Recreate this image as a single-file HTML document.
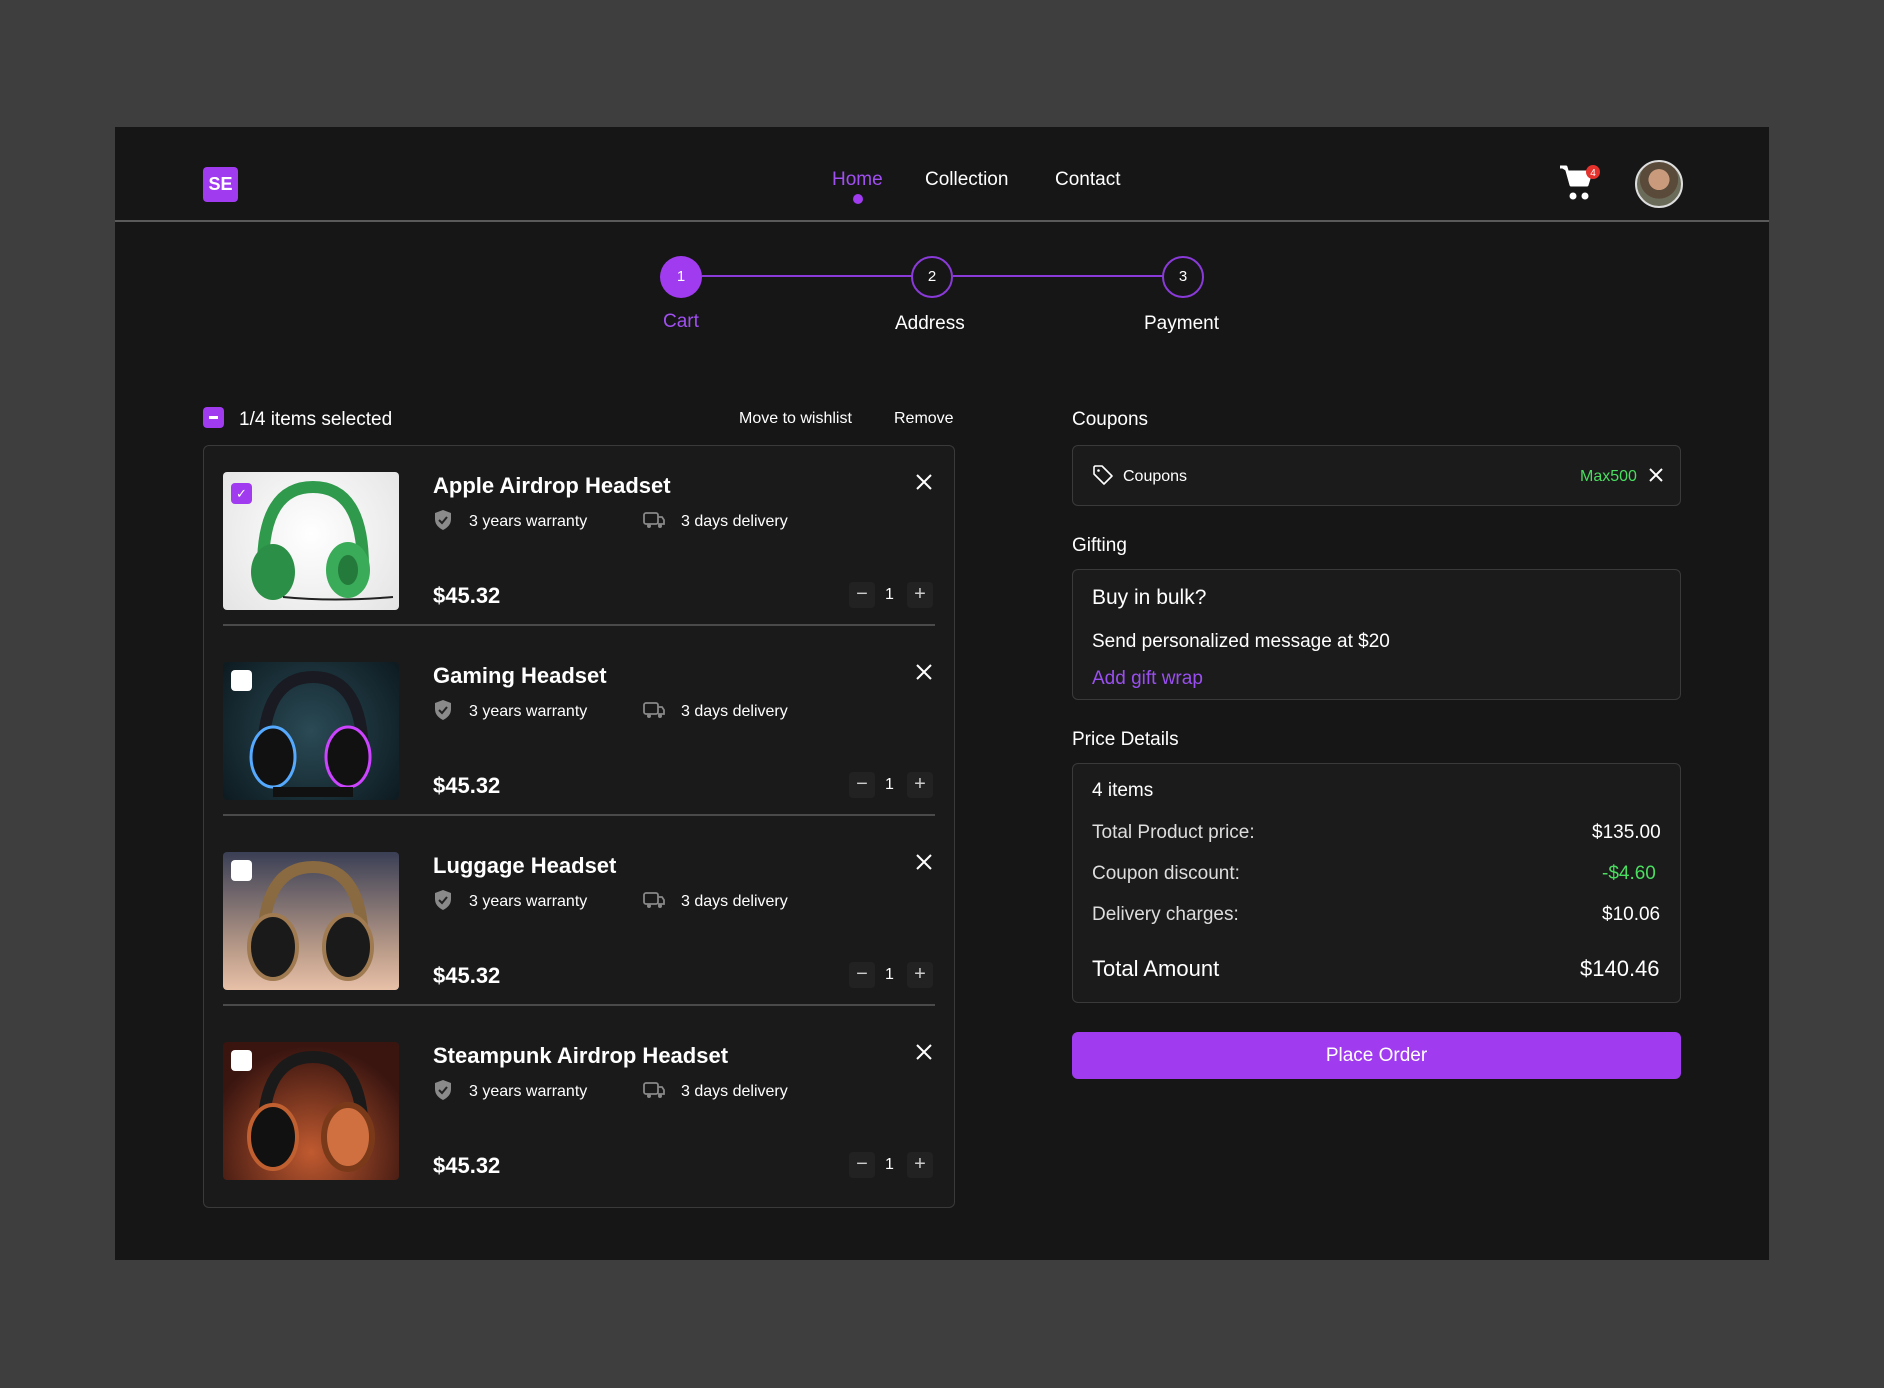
<!DOCTYPE html>
<html><head><meta charset="utf-8"><style>
*{margin:0;padding:0;box-sizing:border-box}
body{width:1884px;height:1388px;background:#3e3e3e;font-family:"Liberation Sans",sans-serif;color:#fff;position:relative;overflow:hidden}
.p{position:absolute;left:115px;top:127px;width:1654px;height:1133px;background:#161616}
.a{position:absolute;white-space:nowrap}
div.a[style*="font-size"]{margin-top:3px}
.box{position:absolute;border:1.5px solid #3a3a3a;border-radius:6px;background:#1b1b1b}
.img{position:absolute;left:223px;width:176px;height:138px;border-radius:4px;overflow:hidden}
.cb{position:absolute;width:21px;height:21px;border-radius:4px;background:#fff}
.qb{position:absolute;width:26px;height:26px;border-radius:4px;background:#222;color:#ccc;font-size:20px;text-align:center;line-height:25px}
.st{position:absolute;width:42px;height:42px;border-radius:50%;text-align:center;font-size:15px}
.pr{position:absolute;font-size:22px;font-weight:bold;left:433px}
</style></head><body>
<div class="p"></div>
<!-- header -->
<div class="a" style="left:203px;top:167px;width:35px;height:35px;background:#a03bf0;border-radius:4px;font-weight:bold;font-size:18px;line-height:35px;text-align:center;margin-top:0">SE</div>
<div class="a" style="left:832px;top:166px;font-size:19px;color:#a04ff0">Home</div>
<div class="a" style="left:853px;top:194px;width:10px;height:10px;border-radius:50%;background:#a03bf0"></div>
<div class="a" style="left:925px;top:166px;font-size:19px">Collection</div>
<div class="a" style="left:1055px;top:166px;font-size:19px">Contact</div>
<svg class="a" style="left:1558px;top:163px" width="44" height="40" viewBox="0 0 44 40"><path d="M2 4h6l5 18h16l4-13H10" fill="#fff" stroke="#fff" stroke-width="3" stroke-linejoin="round"/><circle cx="15" cy="33" r="3.5" fill="#fff"/><circle cx="27" cy="33" r="3.5" fill="#fff"/><circle cx="35" cy="9" r="7" fill="#e5322d"/><text x="35" y="13" font-size="10" fill="#fff" text-anchor="middle" font-family="Liberation Sans">4</text></svg>
<div class="a" style="left:1635px;top:160px;width:48px;height:48px;border-radius:50%;border:2px solid #ddd;background:radial-gradient(circle at 50% 40%,#c99a7c 0 30%,#5a4a3a 31% 55%,#6b6b5a 56%)"></div>
<div class="a" style="left:115px;top:220px;width:1654px;height:2px;background:#5a5a5a"></div>
<!-- stepper -->
<div class="a" style="left:702px;top:275px;width:210px;height:2px;background:#8a3ad8"></div>
<div class="a" style="left:953px;top:275px;width:210px;height:2px;background:#8a3ad8"></div>
<div class="st" style="left:660px;top:256px;background:#a03bf0;line-height:42px">1</div>
<div class="st" style="left:911px;top:256px;border:2px solid #8a3ad8;line-height:38px">2</div>
<div class="st" style="left:1162px;top:256px;border:2px solid #8a3ad8;line-height:38px">3</div>
<div class="a" style="left:663px;top:308px;font-size:19px;color:#a04ff0">Cart</div>
<div class="a" style="left:895px;top:310px;font-size:19px">Address</div>
<div class="a" style="left:1144px;top:310px;font-size:19px">Payment</div>
<!-- list header -->
<div class="a" style="left:203px;top:407px;width:21px;height:21px;border-radius:4px;background:#a03bf0"><div style="position:absolute;left:6px;top:9px;width:9px;height:2.5px;background:#fff"></div></div>
<div class="a" style="left:239px;top:406px;font-size:19px">1/4 items selected</div>
<div class="a" style="left:739px;top:407px;font-size:16px">Move to wishlist</div>
<div class="a" style="left:894px;top:407px;font-size:16px">Remove</div>
<div class="box" style="left:203px;top:445px;width:752px;height:763px;background:#1a1a1a"></div>

<!-- items -->
<div class="img" style="top:472px;background:radial-gradient(circle at 50% 45%,#fff,#e4e4e4)"><svg width="176" height="138"><path d="M40 95 Q40 15 90 15 Q140 15 140 95" fill="none" stroke="#2f9a4c" stroke-width="12"/><ellipse cx="50" cy="100" rx="22" ry="28" fill="#2c8f47"/><ellipse cx="125" cy="98" rx="22" ry="28" fill="#3aab58"/><ellipse cx="125" cy="98" rx="10" ry="15" fill="#237a3b"/><path d="M60 125 Q110 130 170 125" stroke="#222" stroke-width="2" fill="none"/></svg></div>
<div class="img" style="top:662px;background:radial-gradient(circle at 50% 50%,#2a4a55,#0d1a20)"><svg width="176" height="138"><path d="M40 95 Q40 15 90 15 Q140 15 140 95" fill="none" stroke="#1a1a22" stroke-width="12"/><ellipse cx="50" cy="95" rx="22" ry="30" fill="#111" stroke="#5af" stroke-width="3"/><ellipse cx="125" cy="95" rx="22" ry="30" fill="#111" stroke="#c4f" stroke-width="3"/><rect x="50" y="125" width="80" height="10" fill="#111"/></svg></div>
<div class="img" style="top:852px;background:linear-gradient(180deg,#3a3f55,#b89a88 70%,#e8c0a8)"><svg width="176" height="138"><path d="M40 95 Q40 15 90 15 Q140 15 140 95" fill="none" stroke="#8a6a40" stroke-width="12"/><ellipse cx="50" cy="95" rx="24" ry="32" fill="#1a1a1a" stroke="#a07a50" stroke-width="4"/><ellipse cx="125" cy="95" rx="24" ry="32" fill="#1a1a1a" stroke="#a07a50" stroke-width="4"/></svg></div>
<div class="img" style="top:1042px;background:radial-gradient(circle at 50% 80%,#c05a30,#3a1510 75%)"><svg width="176" height="138"><path d="M40 95 Q40 15 90 15 Q140 15 140 95" fill="none" stroke="#1a1a1a" stroke-width="12"/><ellipse cx="50" cy="95" rx="24" ry="32" fill="#111" stroke="#c06030" stroke-width="4"/><ellipse cx="125" cy="95" rx="24" ry="32" fill="#d07040" stroke="#7a3a1a" stroke-width="6"/></svg></div>

<div class="a" style="left:231px;top:483px;width:21px;height:21px;border-radius:4px;background:#a03bf0;color:#fff;font-size:13px;text-align:center;line-height:21px;margin-top:0">✓</div>
<div class="cb" style="left:231px;top:670px"></div>
<div class="cb" style="left:231px;top:860px"></div>
<div class="cb" style="left:231px;top:1050px"></div>

<div class="a" style="left:433px;top:470px;font-size:22px;font-weight:bold">Apple Airdrop Headset</div>
<div class="pr" style="top:583px">$45.32</div>
<div class="a" style="left:433px;top:660px;font-size:22px;font-weight:bold">Gaming Headset</div>
<div class="pr" style="top:773px">$45.32</div>
<div class="a" style="left:433px;top:850px;font-size:22px;font-weight:bold">Luggage Headset</div>
<div class="pr" style="top:963px">$45.32</div>
<div class="a" style="left:433px;top:1040px;font-size:22px;font-weight:bold">Steampunk Airdrop Headset</div>
<div class="pr" style="top:1153px">$45.32</div>

<div class="a" style="left:433px;top:509px"><svg width="20" height="22" viewBox="0 0 20 22"><path d="M10 1 L18 4 V10 Q18 17 10 21 Q2 17 2 10 V4Z" fill="#8a8a8a"/><path d="M6 11l3 3 5-6" stroke="#222" stroke-width="2" fill="none"/></svg></div>
<div class="a" style="left:469px;top:510px;font-size:16px">3 years warranty</div>
<div class="a" style="left:643px;top:510px"><svg width="22" height="20"><rect x="1" y="3" width="14" height="11" rx="2" fill="none" stroke="#888" stroke-width="1.8"/><path d="M15 7h4l2 3v4h-6" fill="none" stroke="#888" stroke-width="1.8"/><circle cx="6" cy="16" r="2" fill="#888"/><circle cx="17" cy="16" r="2" fill="#888"/></svg></div>
<div class="a" style="left:681px;top:510px;font-size:16px">3 days delivery</div>

<div class="a" style="left:433px;top:699px"><svg width="20" height="22" viewBox="0 0 20 22"><path d="M10 1 L18 4 V10 Q18 17 10 21 Q2 17 2 10 V4Z" fill="#8a8a8a"/><path d="M6 11l3 3 5-6" stroke="#222" stroke-width="2" fill="none"/></svg></div>
<div class="a" style="left:469px;top:700px;font-size:16px">3 years warranty</div>
<div class="a" style="left:643px;top:700px"><svg width="22" height="20"><rect x="1" y="3" width="14" height="11" rx="2" fill="none" stroke="#888" stroke-width="1.8"/><path d="M15 7h4l2 3v4h-6" fill="none" stroke="#888" stroke-width="1.8"/><circle cx="6" cy="16" r="2" fill="#888"/><circle cx="17" cy="16" r="2" fill="#888"/></svg></div>
<div class="a" style="left:681px;top:700px;font-size:16px">3 days delivery</div>

<div class="a" style="left:433px;top:889px"><svg width="20" height="22" viewBox="0 0 20 22"><path d="M10 1 L18 4 V10 Q18 17 10 21 Q2 17 2 10 V4Z" fill="#8a8a8a"/><path d="M6 11l3 3 5-6" stroke="#222" stroke-width="2" fill="none"/></svg></div>
<div class="a" style="left:469px;top:890px;font-size:16px">3 years warranty</div>
<div class="a" style="left:643px;top:890px"><svg width="22" height="20"><rect x="1" y="3" width="14" height="11" rx="2" fill="none" stroke="#888" stroke-width="1.8"/><path d="M15 7h4l2 3v4h-6" fill="none" stroke="#888" stroke-width="1.8"/><circle cx="6" cy="16" r="2" fill="#888"/><circle cx="17" cy="16" r="2" fill="#888"/></svg></div>
<div class="a" style="left:681px;top:890px;font-size:16px">3 days delivery</div>

<div class="a" style="left:433px;top:1079px"><svg width="20" height="22" viewBox="0 0 20 22"><path d="M10 1 L18 4 V10 Q18 17 10 21 Q2 17 2 10 V4Z" fill="#8a8a8a"/><path d="M6 11l3 3 5-6" stroke="#222" stroke-width="2" fill="none"/></svg></div>
<div class="a" style="left:469px;top:1080px;font-size:16px">3 years warranty</div>
<div class="a" style="left:643px;top:1080px"><svg width="22" height="20"><rect x="1" y="3" width="14" height="11" rx="2" fill="none" stroke="#888" stroke-width="1.8"/><path d="M15 7h4l2 3v4h-6" fill="none" stroke="#888" stroke-width="1.8"/><circle cx="6" cy="16" r="2" fill="#888"/><circle cx="17" cy="16" r="2" fill="#888"/></svg></div>
<div class="a" style="left:681px;top:1080px;font-size:16px">3 days delivery</div>

<svg class="a" style="left:916px;top:474px" width="16" height="16"><path d="M1 1L15 15M15 1L1 15" stroke="#fff" stroke-width="2"/></svg>
<svg class="a" style="left:916px;top:664px" width="16" height="16"><path d="M1 1L15 15M15 1L1 15" stroke="#fff" stroke-width="2"/></svg>
<svg class="a" style="left:916px;top:854px" width="16" height="16"><path d="M1 1L15 15M15 1L1 15" stroke="#fff" stroke-width="2"/></svg>
<svg class="a" style="left:916px;top:1044px" width="16" height="16"><path d="M1 1L15 15M15 1L1 15" stroke="#fff" stroke-width="2"/></svg>

<div class="qb" style="left:849px;top:582px">−</div><div class="a" style="left:885px;top:583px;font-size:16px">1</div><div class="qb" style="left:907px;top:582px">+</div>
<div class="qb" style="left:849px;top:772px">−</div><div class="a" style="left:885px;top:773px;font-size:16px">1</div><div class="qb" style="left:907px;top:772px">+</div>
<div class="qb" style="left:849px;top:962px">−</div><div class="a" style="left:885px;top:963px;font-size:16px">1</div><div class="qb" style="left:907px;top:962px">+</div>
<div class="qb" style="left:849px;top:1152px">−</div><div class="a" style="left:885px;top:1153px;font-size:16px">1</div><div class="qb" style="left:907px;top:1152px">+</div>

<div class="a" style="left:223px;top:624px;width:712px;height:2px;background:#4a4a4a"></div>
<div class="a" style="left:223px;top:814px;width:712px;height:2px;background:#4a4a4a"></div>
<div class="a" style="left:223px;top:1004px;width:712px;height:2px;background:#4a4a4a"></div>

<!-- right column -->
<div class="a" style="left:1072px;top:406px;font-size:19px">Coupons</div>
<div class="box" style="left:1072px;top:445px;width:609px;height:61px"></div>
<svg class="a" style="left:1092px;top:464px" width="22" height="22"><path d="M2 3v7l10 10 8-8L10 2H3z" fill="none" stroke="#fff" stroke-width="1.6" stroke-linejoin="round"/><circle cx="6.5" cy="6.5" r="1.3" fill="#fff"/></svg>
<div class="a" style="left:1123px;top:465px;font-size:16px">Coupons</div>
<div class="a" style="left:1580px;top:465px;font-size:16px;color:#4ade60">Max500</div>
<svg class="a" style="left:1649px;top:468px" width="14" height="14"><path d="M1 1L13 13M13 1L1 13" stroke="#fff" stroke-width="2"/></svg>

<div class="a" style="left:1072px;top:532px;font-size:19px">Gifting</div>
<div class="box" style="left:1072px;top:569px;width:609px;height:131px"></div>
<div class="a" style="left:1092px;top:583px;font-size:21px">Buy in bulk?</div>
<div class="a" style="left:1092px;top:628px;font-size:19px">Send personalized message at $20</div>
<div class="a" style="left:1092px;top:665px;font-size:19px;color:#9a4ff0">Add gift wrap</div>

<div class="a" style="left:1072px;top:726px;font-size:19px">Price Details</div>
<div class="box" style="left:1072px;top:763px;width:609px;height:240px"></div>
<div class="a" style="left:1092px;top:777px;font-size:19px">4 items</div>
<div class="a" style="left:1092px;top:819px;font-size:19px;color:#ddd">Total Product price:</div>
<div class="a" style="left:1592px;top:819px;font-size:19px">$135.00</div>
<div class="a" style="left:1092px;top:860px;font-size:19px;color:#ddd">Coupon discount:</div>
<div class="a" style="left:1602px;top:860px;font-size:19px;color:#4ade60">-$4.60</div>
<div class="a" style="left:1092px;top:901px;font-size:19px;color:#ddd">Delivery charges:</div>
<div class="a" style="left:1602px;top:901px;font-size:19px">$10.06</div>
<div class="a" style="left:1092px;top:953px;font-size:22px">Total Amount</div>
<div class="a" style="left:1580px;top:953px;font-size:22px">$140.46</div>

<div class="a" style="left:1072px;top:1032px;width:609px;height:47px;background:#a03bf0;border-radius:6px;text-align:center;line-height:47px;font-size:19px;margin-top:0">Place Order</div>
</body></html>
